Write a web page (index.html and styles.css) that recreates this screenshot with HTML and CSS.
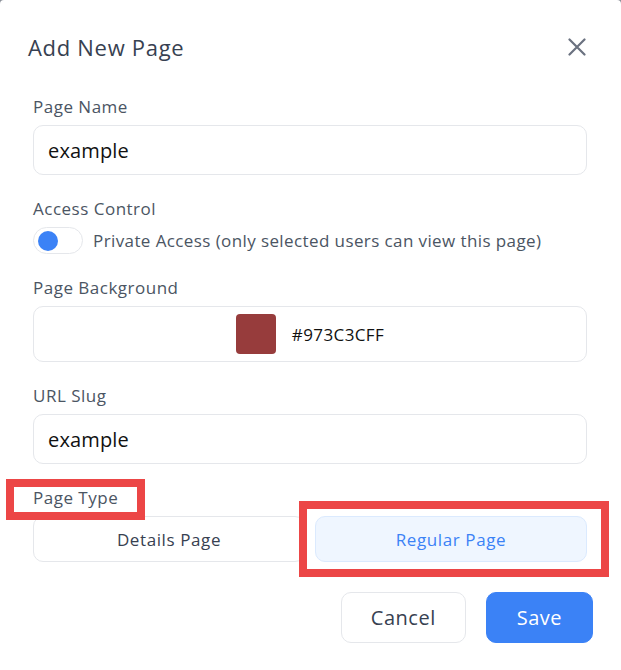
FILE: index.html
```html
<!DOCTYPE html>
<html lang="en">
<head>
<meta charset="utf-8">
<title>Add New Page</title>
<link rel="stylesheet" href="styles.css">
</head>
<body>
<div class="modal">
  <div class="header">
    <h2 class="title">Add New Page</h2>
    <button class="close" aria-label="Close">
      <svg width="18" height="18" viewBox="0 0 18 18"><path d="M1.5 1.5 L16.5 16.5 M16.5 1.5 L1.5 16.5" stroke="#6b7280" stroke-width="2.2" stroke-linecap="round" fill="none"/></svg>
    </button>
  </div>
  <div class="body">
    <div class="field">
      <div class="label">Page Name</div>
      <div class="input">example</div>
    </div>
    <div class="field">
      <div class="label">Access Control</div>
      <div class="toggle-row">
        <span class="toggle"><span class="knob"></span></span>
        <span class="toggle-text">Private Access (only selected users can view this page)</span>
      </div>
    </div>
    <div class="field">
      <div class="label">Page Background</div>
      <div class="color-box">
        <span class="swatch"></span>
        <span class="hex">#973C3CFF</span>
      </div>
    </div>
    <div class="field">
      <div class="label">URL Slug</div>
      <div class="input">example</div>
    </div>
    <div class="field last">
      <div class="label">Page Type</div>
      <div class="segments">
        <div class="seg">Details Page</div>
        <div class="seg active">Regular Page</div>
      </div>
    </div>
  </div>
  <div class="footer">
    <button class="btn cancel">Cancel</button>
    <button class="btn save">Save</button>
  </div>
  <div class="annot annot-label"></div>
  <div class="annot annot-option"></div>
</div>
</body>
</html>
```

FILE: styles.css
```css
html, body {
  margin: 0;
  padding: 0;
  background: #8a8f98;
}
body {
  font-family: "Open Sans", "Liberation Sans", sans-serif;
}
.modal {
  position: relative;
  background: #ffffff;
  min-height: 670px;
  border-radius: 4px 4px 0 0;
}
.header {
  display: flex;
  justify-content: space-between;
  align-items: center;
  padding: 32px 35px 0 28px;
  height: 29px;
}
.title {
  margin: 0;
  font-size: 22px;
  line-height: 28px;
  font-weight: 400;
  letter-spacing: 0.7px;
  color: #374151;
}
.close {
  border: 0;
  background: none;
  padding: 0;
  width: 18px;
  height: 18px;
  display: flex;
}
.body {
  padding: 34px 34px 0 33px;
}
.field {
  margin-bottom: 22px;
}
.field.last {
  margin-bottom: 0;
}
.label {
  font-size: 17px;
  line-height: 24px;
  letter-spacing: 0.5px;
  color: #4b5563;
  margin-bottom: 6px;
}
.input {
  box-sizing: border-box;
  height: 50px;
  border: 1px solid #e5e7eb;
  border-radius: 10px;
  padding: 0 14px;
  display: flex;
  align-items: center;
  font-size: 20px;
  letter-spacing: 0.15px;
  color: #111111;
}
.toggle-row {
  display: flex;
  align-items: center;
  gap: 10px;
  height: 27px;
}
.toggle {
  box-sizing: border-box;
  width: 50px;
  height: 27px;
  border: 1px solid #e5e7eb;
  border-radius: 999px;
  display: flex;
  align-items: center;
  padding-left: 4px;
}
.knob {
  width: 20px;
  height: 20px;
  border-radius: 50%;
  background: #3b82f6;
}
.toggle-text {
  font-size: 17px;
  letter-spacing: 0.4px;
  color: #4b5563;
}
.color-box {
  box-sizing: border-box;
  height: 56px;
  border: 1px solid #e5e7eb;
  border-radius: 10px;
  display: flex;
  align-items: center;
  justify-content: center;
  gap: 16px;
}
.swatch {
  width: 40px;
  height: 40px;
  border-radius: 4px;
  background: #973c3c;
}
.hex {
  font-size: 17px;
  letter-spacing: 0.4px;
  color: #111111;
}
.segments {
  display: grid;
  grid-template-columns: 1fr 1fr;
  gap: 10px;
}
.seg {
  box-sizing: border-box;
  height: 46px;
  border: 1px solid #e5e7eb;
  border-radius: 10px;
  display: flex;
  align-items: center;
  justify-content: center;
  font-size: 17px;
  letter-spacing: 0.6px;
  color: #374151;
}
.seg.active {
  background: #eff6ff;
  border-color: #dbeafe;
  color: #3b82f6;
}
.footer {
  display: flex;
  justify-content: flex-end;
  gap: 20px;
  padding: 30px 28px 0 0;
}
.btn {
  box-sizing: border-box;
  height: 51px;
  border-radius: 10px;
  font-family: inherit;
  font-size: 20px;
  letter-spacing: 0.5px;
  padding: 0 30px;
  cursor: pointer;
}
.cancel {
  background: #ffffff;
  border: 1px solid #e5e7eb;
  color: #374151;
  padding: 0 29px;
}
.save {
  background: #3b82f6;
  border: 1px solid #3b82f6;
  color: #ffffff;
}
.annot {
  position: absolute;
  box-sizing: border-box;
  border: 8px solid #ec4646;
}
.annot-label {
  left: 6px;
  top: 479px;
  width: 139px;
  height: 41px;
}
.annot-option {
  left: 299px;
  top: 501px;
  width: 310px;
  height: 76px;
}
```
